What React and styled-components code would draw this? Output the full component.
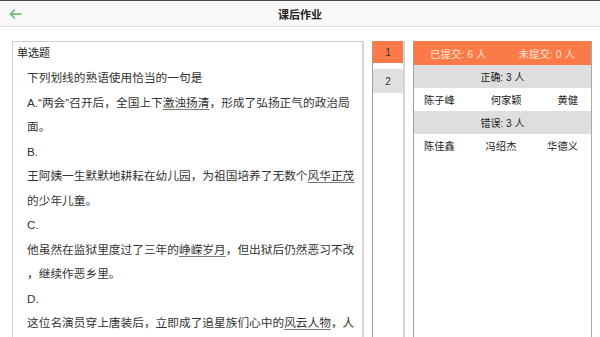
import React from "react";
import styled, { createGlobalStyle } from "styled-components";

const Global = createGlobalStyle`
  html, body { margin: 0; padding: 0; height: 337px; overflow: hidden; background: #fff; }
  body { font-family: "Liberation Sans", "Noto Sans CJK SC", sans-serif; color: #333; }
  * { box-sizing: border-box; }
`;

const Page = styled.div`
  height: 337px;
  display: flex;
  flex-direction: column;
  overflow: hidden;
`;

const TopBar = styled.header`
  flex: none;
  height: 27px;
  border-top: 1px solid #4a4a4a;
  border-bottom: 1px solid #dcdcdc;
  background: #f8f8f8;
  display: grid;
  grid-template-columns: 40px 1fr 40px;
  align-items: center;
`;

const Back = styled.button`
  border: 0;
  background: none;
  padding: 0 0 0 9px;
  display: flex;
  align-items: center;
  height: 100%;
  cursor: pointer;
`;

const Title = styled.h1`
  margin: 0;
  text-align: center;
  font-size: 11px;
  font-weight: 600;
  color: #222;
`;

const Main = styled.main`
  flex: 1;
  min-height: 0;
  display: flex;
  gap: 8px;
  padding: 14px 8px 0 12px;
  overflow: hidden;
`;

const QuestionPanel = styled.section`
  flex: none;
  width: 352px;
  border: 1px solid #cfcfcf;
  border-right: 2px solid #d6d6d6;
  border-bottom: none;
  height: 400px;
`;

const PanelHeader = styled.div`
  height: 22px;
  line-height: 22px;
  padding: 0 4px 0 4px;
  font-size: 11px;
  color: #222;
`;

const Content = styled.div`
  padding: 2px 3px 0 14px;
  font-size: 11.7px;
  line-height: 24.5px;
  color: #333;
  line-break: anywhere;
`;

const Para = styled.p`
  margin: 0;
`;

const U = styled.span`
  text-decoration: underline;
  text-decoration-color: #777;
  text-underline-offset: 2px;
`;

const NumColumn = styled.nav`
  flex: none;
  width: 33px;
  border-left: 1px solid #a0a0a0;
  border-right: 2px solid #d4d4d4;
  height: 400px;
  display: flex;
  flex-direction: column;
  gap: 6px;
`;

const NumCell = styled.div`
  height: ${(p) => (p.$active ? 22 : 24)}px;
  display: flex;
  align-items: center;
  justify-content: center;
  font-size: 10px;
  color: #333;
  background: ${(p) => (p.$active ? "#fb7a47" : "#e0e0e0")};
`;

const StatsPanel = styled.section`
  flex: 1;
  border-left: 1px solid #a0a0a0;
  border-right: 1px solid #a8a8a8;
  height: 400px;
`;

const StatsHeader = styled.div`
  height: 24px;
  background: #fb7a47;
  display: flex;
  justify-content: space-between;
  align-items: center;
  padding: 0 16px 0 16px;
  font-size: 10.5px;
  color: #ffe3d6;
`;

const GroupTitle = styled.div`
  height: 23px;
  background: #dedede;
  display: flex;
  align-items: center;
  justify-content: center;
  font-size: 10px;
  color: #222;
`;

const NameRow = styled.div`
  height: 23px;
  display: flex;
  align-items: center;
  justify-content: space-between;
  padding: 0 13px 0 10px;
  font-size: 10.3px;
  color: #222;
`;

const Arrow = () => (
  <svg width="13" height="10" viewBox="0 0 13 10" fill="none">
    <path d="M12 5H1.5M5.5 1L1.5 5l4 4" stroke="#5cb85c" strokeWidth="1.4" strokeLinecap="round" strokeLinejoin="round" />
  </svg>
);

const groups = [
  { title: "正确: 3 人", names: ["陈子峰", "何家颖", "黄健"] },
  { title: "错误: 3 人", names: ["陈佳鑫", "冯绍杰", "华德义"] },
];

export default function App() {
  return (
    <Page>
      <Global />
      <TopBar>
        <Back aria-label="返回">
          <Arrow />
        </Back>
        <Title>课后作业</Title>
        <span />
      </TopBar>
      <Main>
        <QuestionPanel>
          <PanelHeader>单选题</PanelHeader>
          <Content>
            <Para>下列划线的熟语使用恰当的一句是</Para>
            <Para>
              A.“两会”召开后，全国上下<U>激浊扬清</U>，形成了弘扬正气的政治局面。
            </Para>
            <Para>B.</Para>
            <Para>
              王阿姨一生默默地耕耘在幼儿园，为祖国培养了无数个<U>风华正茂</U>的少年儿童。
            </Para>
            <Para>C.</Para>
            <Para>
              他虽然在监狱里度过了三年的<U>峥嵘岁月</U>，但出狱后仍然恶习不改，继续作恶乡里。
            </Para>
            <Para>D.</Para>
            <Para>
              这位名演员穿上唐装后，立即成了追星族们心中的<U>风云人物</U>，人们纷纷效仿起来。
            </Para>
          </Content>
        </QuestionPanel>
        <NumColumn>
          <NumCell $active>1</NumCell>
          <NumCell>2</NumCell>
        </NumColumn>
        <StatsPanel>
          <StatsHeader>
            <span>已提交: 6 人</span>
            <span>未提交: 0 人</span>
          </StatsHeader>
          {groups.map((g) => (
            <React.Fragment key={g.title}>
              <GroupTitle>{g.title}</GroupTitle>
              <NameRow>
                {g.names.map((n) => (
                  <span key={n}>{n}</span>
                ))}
              </NameRow>
            </React.Fragment>
          ))}
        </StatsPanel>
      </Main>
    </Page>
  );
}
